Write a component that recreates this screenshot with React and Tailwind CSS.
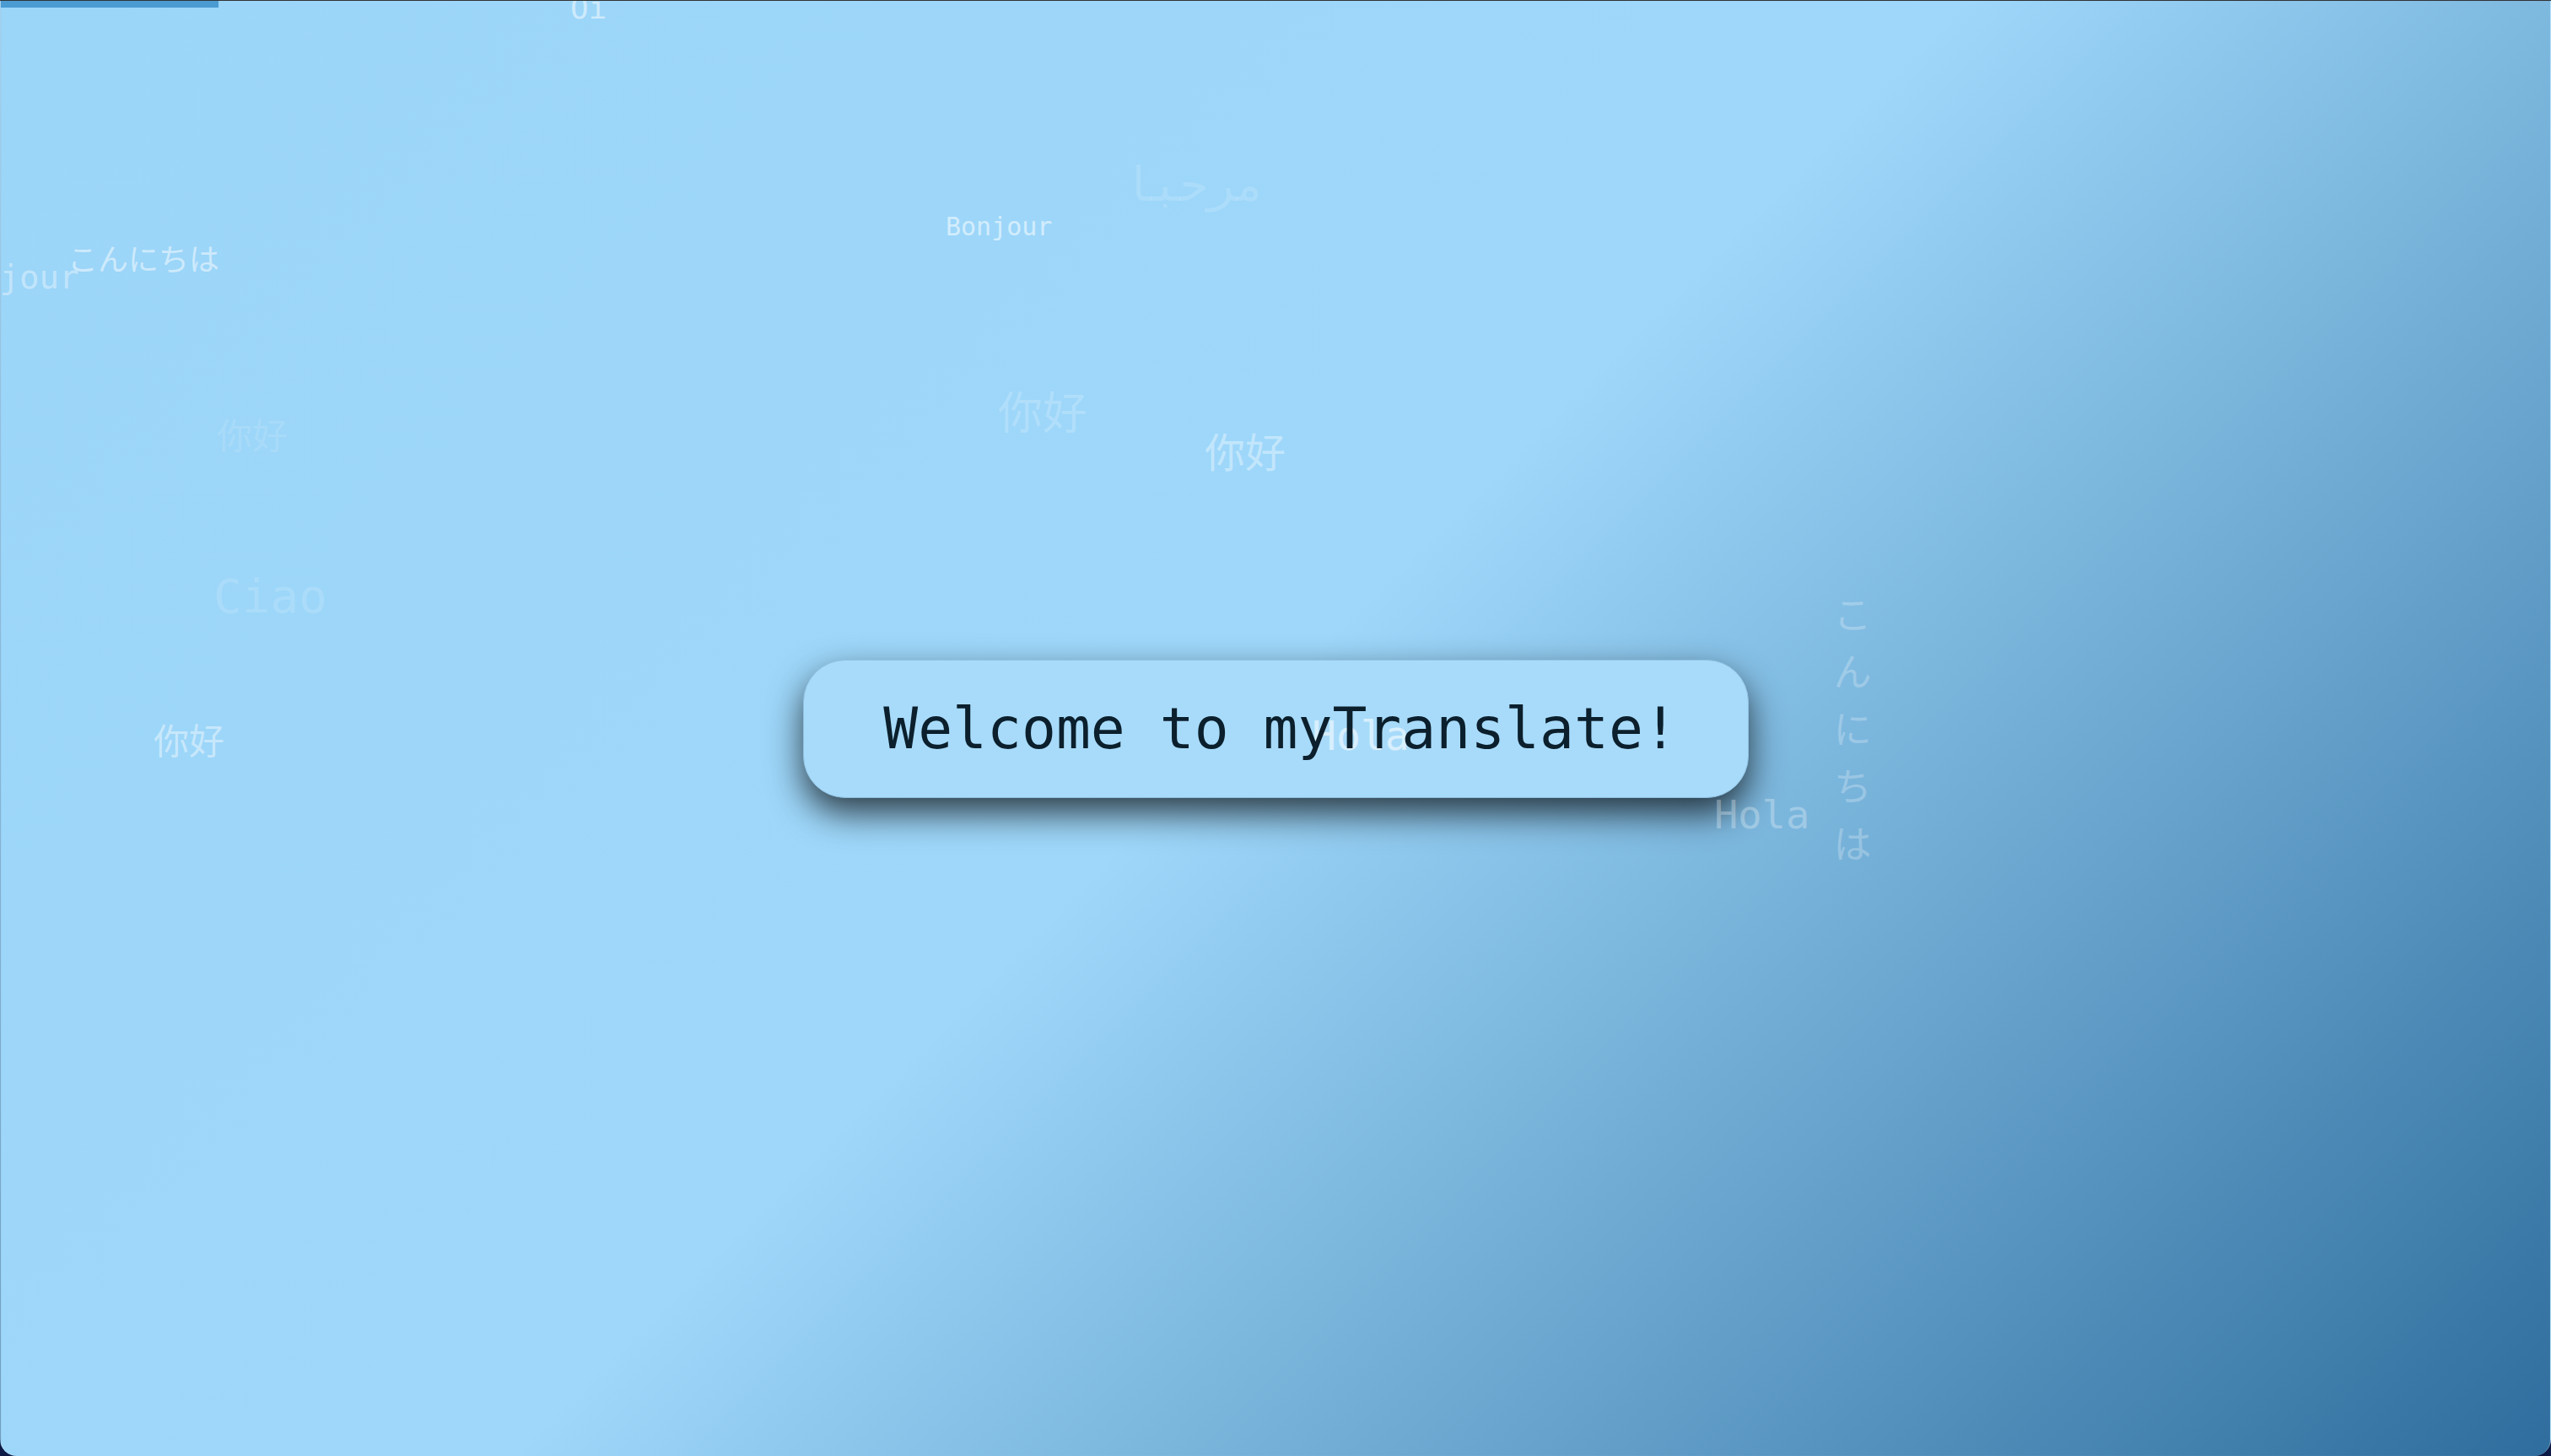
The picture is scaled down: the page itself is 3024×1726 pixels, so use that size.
import React from 'react'

const MONO = "font-['DejaVu_Sans_Mono','Liberation_Mono',monospace]"
const JP = "font-['Noto_Sans_CJK_JP',sans-serif]"
const SC = "font-['Noto_Sans_CJK_SC',sans-serif]"

const words = [
  { text: 'Oi', cls: `${MONO} text-[36px] text-white/50 top-[-9px] left-[675px]` },
  { text: 'Bonjour', cls: `${MONO} text-[39px] text-white/40 top-[308px] left-[-72px]` },
  { text: 'こんにちは', cls: `${JP} text-[36px] text-white/50 top-[286px] left-[79px]` },
  { text: 'Bonjour', cls: `${MONO} text-[30px] text-white/55 top-[253px] left-[1120px]` },
  { text: 'مرحبا', cls: `${MONO} text-[56px] text-white/15 top-[190px] left-[1330px]` },
  { text: '你好', cls: `${SC} text-[42px] text-white/15 top-[492px] left-[256px]` },
  { text: 'Ciao', cls: `${MONO} text-[56px] text-white/15 top-[678px] left-[252px]` },
  { text: '你好', cls: `${SC} text-[42px] text-white/45 top-[854px] left-[181px]` },
  { text: '你好', cls: `${SC} text-[53px] text-white/20 top-[459px] left-[1182px]` },
  { text: '你好', cls: `${SC} text-[48px] text-white/40 top-[508px] left-[1427px]` },
  { text: 'Hola', cls: `${MONO} text-[48px] text-white/55 top-[847px] left-[1554px]` },
  { text: 'Hola', cls: `${MONO} text-[47px] text-white/30 top-[941px] left-[2031px]` },
]

export default function App() {
  return (
    <div className="h-screen w-full bg-[#0d1a45]">
      <div className="relative h-full w-full overflow-hidden rounded-b-[20px] border-t border-t-[#333] border-x border-x-white/30 bg-[linear-gradient(135deg,#9bd5f8_0%,#9ed7fa_49%,#2e6d9d_100%)] flex items-center justify-center">
        <div className="absolute top-0 left-0 h-[8px] w-[258px] bg-[#4a9bd2]" />

        <div className="h-[164px] w-[1121px] pl-[12px] rounded-[50px] border border-[#8fc0e0] bg-[#a8dbfa] shadow-[0_18px_40px_rgba(0,0,0,0.72)] flex items-center justify-center">
          <span className={`relative z-10 ${MONO} text-[68px] leading-none text-[#0b1f2c]`}>
            Welcome to myTranslate!
          </span>
        </div>

        {words.map((w, i) => (
          <span key={i} className={`absolute whitespace-nowrap leading-none pointer-events-none ${w.cls}`}>
            {w.text}
          </span>
        ))}

        <span className={`absolute top-[704px] left-[2172px] ${JP} text-[46px] leading-none tracking-[22px] text-white/25 [writing-mode:vertical-rl] pointer-events-none`}>
          こんにちは
        </span>
      </div>
    </div>
  )
}
